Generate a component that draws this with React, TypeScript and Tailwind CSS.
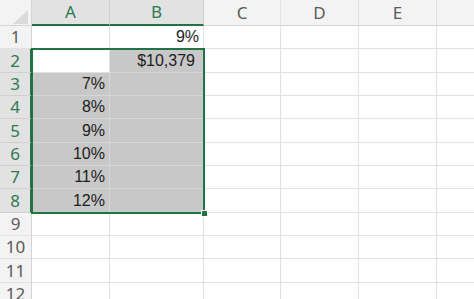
import React from "react";

const cols = [
  { key: "A", w: 78, label: "A" },
  { key: "B", w: 94, label: "B" },
  { key: "C", w: 77, label: "C" },
  { key: "D", w: 78, label: "D" },
  { key: "E", w: 78, label: "E" },
  { key: "F", w: 120, label: "" },
];

const rowHeights = [23, 24, 23, 23, 24, 23, 23, 24, 23, 23, 24, 23];

const data: Record<string, string> = {
  B1: "9%",
  B2: "$10,379",
  A3: "7%",
  A4: "8%",
  A5: "9%",
  A6: "10%",
  A7: "11%",
  A8: "12%",
};

const widthClass: Record<number, string> = {
  78: "w-[78px]",
  94: "w-[94px]",
  77: "w-[77px]",
  120: "w-[120px]",
};

const heightClass: Record<number, string> = {
  23: "h-[23px]",
  24: "h-[24px]",
};

function isSel(c: string, r: number) {
  return (c === "A" || c === "B") && r >= 2 && r <= 8;
}

export default function App() {
  return (
    <div className="relative w-[474px] h-[299px] overflow-hidden bg-white [font-family:'Liberation_Sans',Arial,sans-serif]">
      {/* Header row */}
      <div className="flex h-[26px]">
        <div className="relative w-[32px] shrink-0 h-[26px] bg-[#f3f3f3] border-r border-b border-[#d4d4d4]">
          <svg className="absolute left-[13px] top-[10px]" width="15" height="14" viewBox="0 0 15 14">
            <polygon points="15,0 15,14 0,14" fill="#dadada" />
          </svg>
        </div>
        {cols.map((c) => {
          const sel = c.key === "A" || c.key === "B";
          return (
            <div
              key={c.key}
              className={`${widthClass[c.w]} shrink-0 h-[26px] flex items-center justify-center text-[17px] [font-family:'Noto_Sans',sans-serif] border-r ${
                sel
                  ? "bg-[#e2e2e2] text-[#2d7a52] border-b-2 border-b-[#217346] border-r-[#cfcfcf]"
                  : "bg-[#f3f3f3] text-[#5a5a5a] border-b border-b-[#d4d4d4] border-r-[#e1e1e1]"
              }`}
            >
              {c.label}
            </div>
          );
        })}
      </div>

      {/* Rows */}
      {rowHeights.map((h, i) => {
        const r = i + 1;
        const rowSel = r >= 2 && r <= 8;
        return (
          <div key={r} className={`flex ${heightClass[h]}`}>
            <div
              className={`w-[32px] shrink-0 flex items-center justify-center text-[17px] [font-family:'Noto_Sans',sans-serif] border-b ${
                rowSel
                  ? "bg-[#e2e2e2] text-[#2d7a52] border-r-2 border-r-[#217346] border-b-[#cfcfcf]"
                  : "bg-[#f3f3f3] text-[#5a5a5a] border-r border-r-[#d4d4d4] border-b-[#e1e1e1]"
              }`}
            >
              {r}
            </div>
            {cols.map((c) => {
              const id = `${c.key}${r}`;
              const sel = isSel(c.key, r) && id !== "A2";
              return (
                <div
                  key={id}
                  className={`${widthClass[c.w]} shrink-0 flex items-center justify-end ${
                    id === "B2" ? "pr-[8px]" : "pr-[4px]"
                  } text-[16px] text-[#1c1c1c] border-r border-b ${
                    sel ? "bg-[#c8c8c8] border-[#d6d6d6]" : "bg-white border-[#e1e1e1]"
                  }`}
                >
                  {data[id] ?? ""}
                </div>
              );
            })}
          </div>
        );
      })}

      {/* Selection border */}
      <div className="absolute left-[31px] top-[48px] w-[174px] h-[166px] border-2 border-[#217346] pointer-events-none" />
      {/* Fill handle */}
      <div className="absolute left-[201px] top-[210px] w-[7px] h-[7px] bg-[#217346] border border-white" />
    </div>
  );
}
